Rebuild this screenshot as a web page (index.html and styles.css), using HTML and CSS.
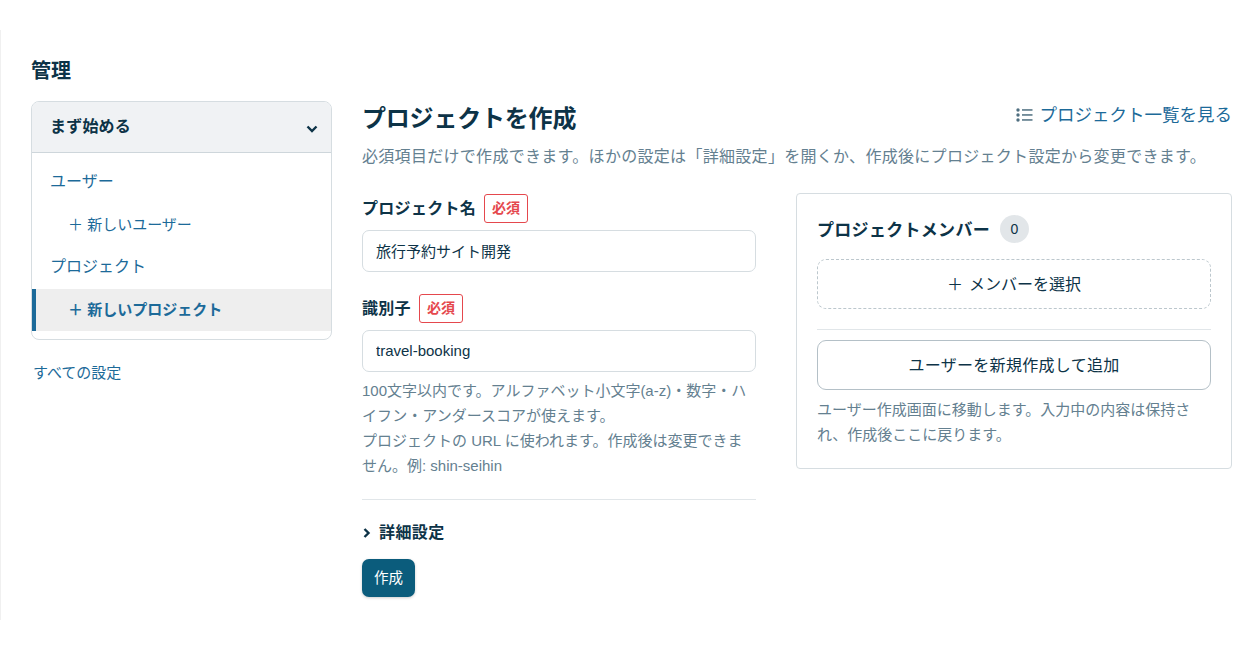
FILE: index.html
```html
<!DOCTYPE html>
<html lang="ja">
<head>
    <meta charset="UTF-8">
    <title>プロジェクトを作成</title>
    <link rel="stylesheet" href="styles.css">
</head>
<body>
    <div class="page">
        <aside class="side">
            <h2 class="side-title">管理</h2>
            <div class="menu">
                <div class="menu-head">
                    <span>まず始める</span>
                    <svg class="chev" width="12" height="12" viewBox="0 0 12 12"><path d="M1.5 3.5L6 8l4.5-4.5" fill="none" stroke="#0d3347" stroke-width="2.4"/></svg>
                </div>
                <div class="menu-body">
                    <a class="menu-item">ユーザー</a>
                    <a class="menu-item sub">＋ 新しいユーザー</a>
                    <a class="menu-item">プロジェクト</a>
                    <a class="menu-item sub active">＋ 新しいプロジェクト</a>
                </div>
            </div>
            <a class="all-settings">すべての設定</a>
        </aside>
        <main class="main">
            <div class="main-head">
                <h1>プロジェクトを作成</h1>
                <a class="list-link">
                    <svg width="17" height="14" viewBox="0 0 17 14"><g fill="#4f6f80"><circle cx="2" cy="2" r="1.7"/><circle cx="2" cy="7" r="1.7"/><circle cx="2" cy="12" r="1.7"/><rect x="6" y="1.2" width="10.5" height="1.5"/><rect x="6" y="6.2" width="10.5" height="1.5"/><rect x="6" y="11.2" width="10.5" height="1.5"/></g></svg>
                    <span>プロジェクト一覧を見る</span>
                </a>
            </div>
            <p class="lead">必須項目だけで作成できます。ほかの設定は「詳細設定」を開くか、作成後にプロジェクト設定から変更できます。</p>
            <div class="columns">
                <form class="form">
                    <div class="label-row"><label>プロジェクト名</label><span class="req">必須</span></div>
                    <input class="field" type="text" value="旅行予約サイト開発">
                    <div class="label-row second"><label>識別子</label><span class="req">必須</span></div>
                    <input class="field" type="text" value="travel-booking">
                    <p class="help">100文字以内です。アルファベット小文字(a-z)・数字・ハイフン・アンダースコアが使えます。<br>プロジェクトの URL に使われます。作成後は変更できません。例: shin-seihin</p>
                    <div class="advanced">
                        <svg width="10" height="12" viewBox="0 0 10 12"><path d="M2.5 2l4 4-4 4" fill="none" stroke="#0d3347" stroke-width="2.4"/></svg>
                        <span>詳細設定</span>
                    </div>
                    <button class="submit" type="button">作成</button>
                </form>
                <section class="panel">
                    <div class="panel-head"><span>プロジェクトメンバー</span><span class="count">0</span></div>
                    <button class="pick" type="button"><span class="plus">＋</span>メンバーを選択</button>
                    <button class="new-user" type="button">ユーザーを新規作成して追加</button>
                    <p class="panel-note">ユーザー作成画面に移動します。入力中の内容は保持され、作成後ここに戻ります。</p>
                </section>
            </div>
        </main>
    </div>
</body>
</html>
```

FILE: styles.css
```css
* {
    box-sizing: border-box;
}
body {
    margin: 0;
    background-color: #fff;
    color: #0d3347;
    font-family: "Liberation Sans", "Noto Sans CJK JP", sans-serif;
}
a {
    color: #1c6a99;
}
.page {
    display: flex;
    gap: 30px;
    height: 590px;
    margin-top: 30px;
    padding: 0 28px 0 30px;
    border-left: 1px solid #f0f0f0;
}
.side {
    width: 301px;
    flex-shrink: 0;
}
.side-title {
    margin: 27px 0 16px;
    font-size: 20px;
    line-height: 28px;
    font-weight: 700;
}
.menu {
    border: 1px solid #d6dde1;
    border-radius: 8px;
    overflow: hidden;
    height: 239px;
}
.menu-head {
    display: flex;
    justify-content: space-between;
    align-items: center;
    height: 51px;
    padding: 0 13px 4px 18px;
    background-color: #f0f2f4;
    border-bottom: 1px solid #ced6db;
    font-size: 16px;
    letter-spacing: 0.2px;
    font-weight: 700;
}
.chev {
    margin-top: 7px;
}
.menu-body {
    padding-top: 8px;
}
.menu-item {
    display: block;
    height: 42.6px;
    line-height: 42px;
    padding-left: 18px;
    font-size: 16px;
}
.menu-item.sub {
    padding-left: 36px;
    font-size: 15px;
    line-height: 41px;
}
.menu-item.active {
    padding-left: 32px;
    border-left: 4px solid #1c6a99;
    background-color: #eee;
    font-weight: 700;
}
.all-settings {
    display: block;
    margin: 23px 0 0 2px;
    font-size: 15px;
    line-height: 20px;
}
.main {
    flex: 1;
    min-width: 0;
}
.main-head {
    display: flex;
    justify-content: space-between;
    align-items: flex-start;
    margin-top: 71px;
}
h1 {
    margin: 0;
    font-size: 24px;
    letter-spacing: -0.2px;
    line-height: 36px;
    font-weight: 700;
}
.list-link {
    display: flex;
    align-items: center;
    gap: 7px;
    margin-top: 1px;
    font-size: 17.5px;
    line-height: 26px;
}
.lead {
    margin: 8px 0 0;
    color: #648090;
    font-size: 16px;
    letter-spacing: 0.3px;
    line-height: 24px;
    white-space: nowrap;
}
.columns {
    display: flex;
    gap: 40px;
    margin-top: 24px;
}
.form {
    width: 394px;
    flex-shrink: 0;
}
.label-row {
    display: flex;
    align-items: center;
    gap: 8px;
    height: 30px;
    margin-bottom: 7px;
    font-size: 16px;
    letter-spacing: 0.3px;
    font-weight: 700;
}
.label-row.second {
    margin-top: 21px;
}
.label-row label {
    margin-top: -2px;
}
.req {
    padding: 0 7px;
    border: 1px solid #e5484d;
    border-radius: 3px;
    color: #e5484d;
    font-size: 14px;
    letter-spacing: 0;
    line-height: 27px;
}
.field {
    display: block;
    width: 100%;
    height: 42px;
    padding: 0 13px 2px;
    border: 1px solid #d6dde1;
    border-radius: 7px;
    color: #0d3347;
    font-family: inherit;
    font-size: 15px;
}
.help {
    margin: 6px 0 0;
    padding-bottom: 21px;
    border-bottom: 1px solid #e1e6e9;
    color: #648090;
    font-size: 15px;
    line-height: 25px;
}
.advanced {
    display: flex;
    align-items: center;
    gap: 7px;
    margin-top: 21px;
    font-size: 16px;
    letter-spacing: 0.4px;
    line-height: 24px;
    font-weight: 700;
}
.submit {
    display: block;
    width: 53px;
    height: 38px;
    margin-top: 14px;
    padding: 0 0 3px;
    border: none;
    border-radius: 7px;
    background-color: #0b5c7c;
    color: #fff;
    font-family: inherit;
    font-size: 14.5px;
    box-shadow: 0 1px 3px rgba(0, 0, 0, 0.2);
}
.panel {
    width: 436px;
    height: 276px;
    padding: 19px 20px 20px;
    border: 1px solid #d6dde1;
    border-radius: 4px;
}
.panel-head {
    display: flex;
    align-items: center;
    gap: 10px;
    height: 30px;
    font-size: 17px;
    letter-spacing: 0.3px;
    font-weight: 700;
}
.count {
    width: 29px;
    height: 28px;
    margin-top: 2px;
    border-radius: 50%;
    background-color: #e2e6e9;
    text-align: center;
    font-size: 14px;
    letter-spacing: 0;
    line-height: 28px;
    font-weight: 400;
}
.pick,
.new-user {
    display: block;
    width: 100%;
    height: 50px;
    padding-bottom: 3px;
    background: #fff;
    color: #0d3347;
    font-family: inherit;
    font-size: 16px;
    border-radius: 9px;
}
.pick {
    margin-top: 16px;
    border: 1px dashed #bcc7cd;
}
.plus {
    margin-right: 6px;
}
.new-user {
    margin-top: 31px;
    border: 1px solid #b4c0c7;
    letter-spacing: 0.3px;
    position: relative;
}
.new-user::before {
    content: "";
    position: absolute;
    left: -1px;
    right: -1px;
    top: -12px;
    border-top: 1px solid #e1e6e9;
}
.panel-note {
    margin: 7px 0 0;
    color: #648090;
    font-size: 15px;
    line-height: 25px;
}
```
